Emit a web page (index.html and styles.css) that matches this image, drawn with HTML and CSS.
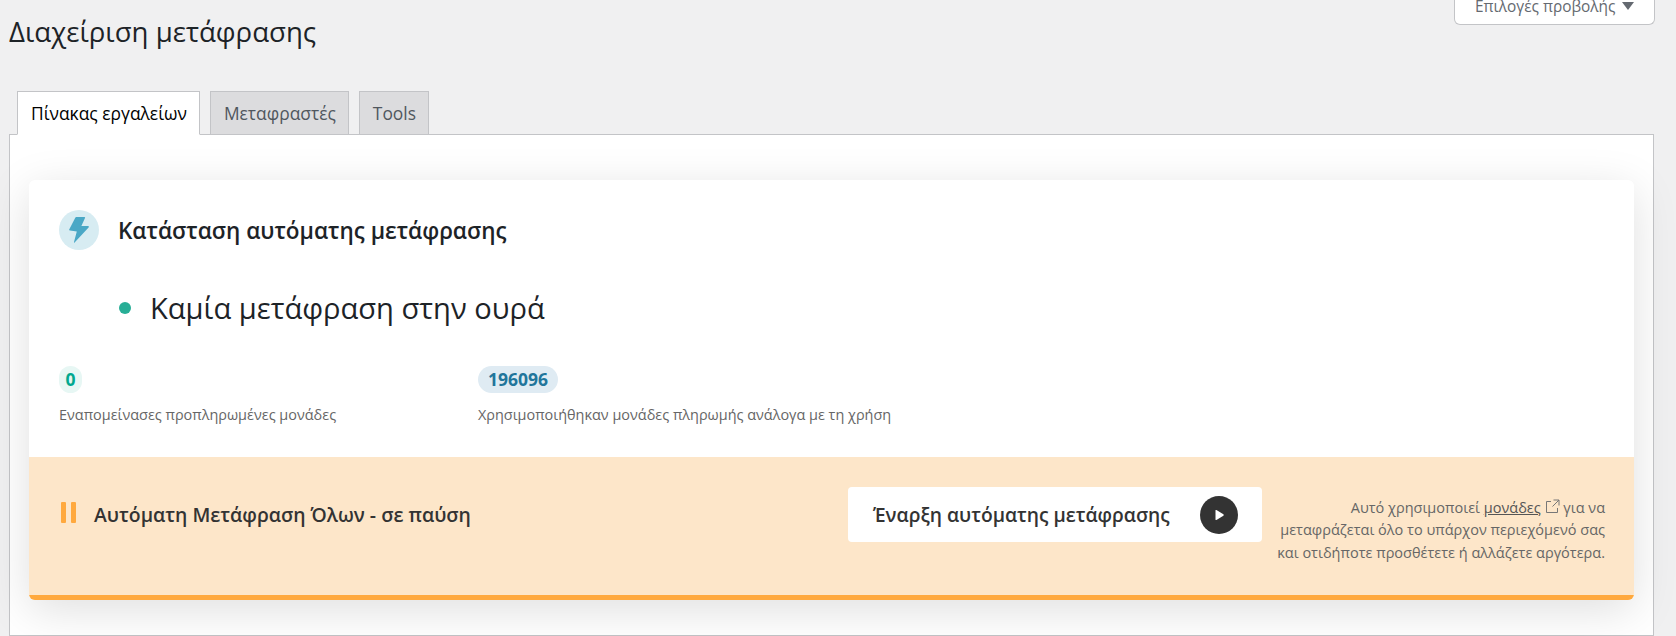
FILE: index.html
```html
<!DOCTYPE html>
<html lang="el">

<head>
  <meta charset="UTF-8">
  <meta name="viewport" content="width=device-width, initial-scale=1.0">
  <title>Διαχείριση μετάφρασης</title>
  <link rel="stylesheet" href="styles.css">
</head>

<body>
  <div class="wrap">
    <div class="top">
      <h1>Διαχείριση μετάφρασης</h1>
      <button class="options-btn">Επιλογές προβολής <span class="arrow"></span></button>
    </div>
    <div class="tabs">
      <a class="tab active" href="#">Πίνακας εργαλείων</a>
      <a class="tab" href="#">Μεταφραστές</a>
      <a class="tab" href="#">Tools</a>
    </div>
    <div class="panel">
      <div class="card">
        <div class="card-top">
          <div class="card-head">
            <span class="bolt">
              <svg width="20" height="26" viewBox="0 0 20 26">
                <path d="M6.4 .6 Q6.6 0 7.4 0 L15.4 0 Q16.4 0 16 1 L12.4 9 L19 9 Q20.4 9.2 19.6 10.4 L5.6 25.6 Q4.8 26.2 5 25 L7.8 14.4 L1 13.6 Q-.2 13.4 .2 12.4 Z" fill="#4aa8c6"/>
              </svg>
            </span>
            <h2>Κατάσταση αυτόματης μετάφρασης</h2>
          </div>
          <div class="status"><span class="dot"></span>Καμία μετάφραση στην ουρά</div>
          <div class="stats">
            <div class="stat">
              <span class="pill green">0</span>
              <p>Εναπομείνασες προπληρωμένες μονάδες</p>
            </div>
            <div class="stat">
              <span class="pill blue">196096</span>
              <p>Χρησιμοποιήθηκαν μονάδες πληρωμής ανάλογα με τη χρήση</p>
            </div>
          </div>
        </div>
        <div class="card-foot">
          <div class="paused">
            <span class="pause"><i></i><i></i></span>
            <strong>Αυτόματη Μετάφραση Όλων - σε παύση</strong>
          </div>
          <a class="start-btn" href="#">
            Έναρξη αυτόματης μετάφρασης
            <span class="play">
              <svg width="12" height="12" viewBox="0 0 12 12"><path d="M2.5 1.5 Q2.5 .6 3.4 1 L10.4 5.2 Q11.2 6 10.4 6.8 L3.4 11 Q2.5 11.4 2.5 10.5 Z" fill="#fff"/></svg>
            </span>
          </a>
          <p class="note">
            Αυτό χρησιμοποιεί <a href="#">μονάδες</a>
            <svg class="ext" width="15" height="15" viewBox="0 0 15 15"><path d="M6 2.5 H1.5 V13.5 H12.5 V9 M8.5 1 H14 V6.5 M14 1 L7.5 7.5" fill="none" stroke="#777" stroke-width="1"/></svg>
            για να<br>μεταφράζεται όλο το υπάρχον περιεχόμενό σας<br>και οτιδήποτε προσθέτετε ή αλλάζετε αργότερα.
          </p>
        </div>
      </div>
    </div>
  </div>
</body>

</html>
```

FILE: styles.css
```css
* {
  margin: 0;
  padding: 0;
  box-sizing: border-box;
}

html,
body {
  height: 636px;
  overflow: hidden;
}

body {
  background-color: #f0f0f1;
  font-family: "Open Sans", "Noto Sans", sans-serif;
  color: #2c3338;
}

a {
  text-decoration: none;
}

.wrap {
  padding: 0 22px 0 9px;
}

.top {
  display: flex;
  justify-content: space-between;
  align-items: flex-start;
  height: 49px;
  margin-right: -1px;
}

h1 {
  padding-top: 13px;
  font-size: 27.6px;
  font-weight: 400;
  line-height: 36px;
  color: #1d2327;
}

.options-btn {
  display: flex;
  align-items: center;
  gap: 7px;
  width: 201px;
  height: 25px;
  padding: 0 20px 12px;
  background-color: #fff;
  border: 1px solid #c3c4c7;
  border-top: 0;
  border-radius: 0 0 6px 6px;
  font-family: inherit;
  font-size: 15.4px;
  color: #646970;
  white-space: nowrap;
}

.arrow {
  width: 0;
  height: 0;
  border-left: 6px solid transparent;
  border-right: 6px solid transparent;
  border-top: 8px solid #646970;
}

.tabs {
  display: flex;
  gap: 10px;
  margin-top: 42px;
  padding-left: 8px;
}

.tab {
  height: 44px;
  margin-bottom: -1px;
  padding: 0 12px 0 13px;
  background-color: #dcdcde;
  border: 1px solid #c3c4c7;
  font-size: 17.4px;
  line-height: 42px;
  color: #50575e;
  position: relative;
}

.tab.active {
  background-color: #fff;
  border-bottom-color: #fff;
  color: #000;
}

.panel {
  height: 502px;
  padding: 45px 19px 0;
  background-color: #fff;
  border: 1px solid #c3c4c7;
}

.card {
  height: 420px;
  background-color: #fff;
  border-radius: 6px;
  box-shadow: 0 10px 45px rgba(0, 0, 0, .13);
  overflow: hidden;
}

.card-top {
  height: 277px;
  padding: 30px 30px 0;
}

.card-head {
  display: flex;
  align-items: center;
  gap: 19px;
}

.bolt {
  display: flex;
  align-items: center;
  justify-content: center;
  width: 40px;
  height: 40px;
  background-color: #d7ecf2;
  border-radius: 50%;
}

h2 {
  font-size: 22.5px;
  font-weight: 600;
  color: #1d2327;
}

.status {
  display: flex;
  align-items: center;
  gap: 19px;
  margin: 36px 0 0 60px;
  font-size: 29.1px;
  line-height: 44px;
  font-weight: 400;
  color: #1d2327;
}

.dot {
  width: 12px;
  height: 12px;
  background-color: #27ae96;
  border-radius: 50%;
}

.stats {
  display: flex;
  margin-top: 36px;
}

.stat {
  width: 419px;
}

.pill {
  display: inline-block;
  height: 27px;
  padding: 0 10px;
  border-radius: 14px;
  font-size: 17.5px;
  font-weight: 700;
  line-height: 27px;
}

.pill.green {
  padding: 0 6.5px;
  background-color: #e7f7f4;
  color: #00a88f;
}

.pill.blue {
  background-color: #dfebf3;
  color: #21759b;
}

.stat p {
  margin-top: 12px;
  font-size: 14.45px;
  line-height: 20px;
  color: #666;
}

.card-foot {
  display: flex;
  align-items: center;
  height: 143px;
  padding: 0 29px 23px 32px;
  background-color: #fde6c9;
  border-bottom: 5px solid #ffa93e;
}

.paused {
  display: flex;
  align-items: center;
  flex: 1;
  gap: 18px;
  font-size: 19.4px;
  color: #333;
}

.paused strong {
  font-weight: 600;
}

.pause {
  display: flex;
  gap: 5px;
  margin-bottom: 5px;
}

.pause i {
  width: 5px;
  height: 21px;
  background-color: #ffa93e;
  border-radius: 1px;
}

.start-btn {
  display: flex;
  align-items: center;
  justify-content: space-between;
  width: 414px;
  height: 55px;
  padding: 0 24px 0 25px;
  background-color: #fff;
  border-radius: 4px;
  font-size: 19.25px;
  font-weight: 600;
  color: #333;
}

.play {
  display: flex;
  align-items: center;
  justify-content: center;
  width: 38px;
  height: 38px;
  background-color: #333;
  border-radius: 50%;
}

.note {
  width: 343px;
  margin-top: 32px;
  font-size: 14.5px;
  line-height: 22.5px;
  text-align: right;
  color: #666;
}

.note a {
  color: #555;
  text-decoration: underline;
}

.ext {
  vertical-align: -1px;
}
```
